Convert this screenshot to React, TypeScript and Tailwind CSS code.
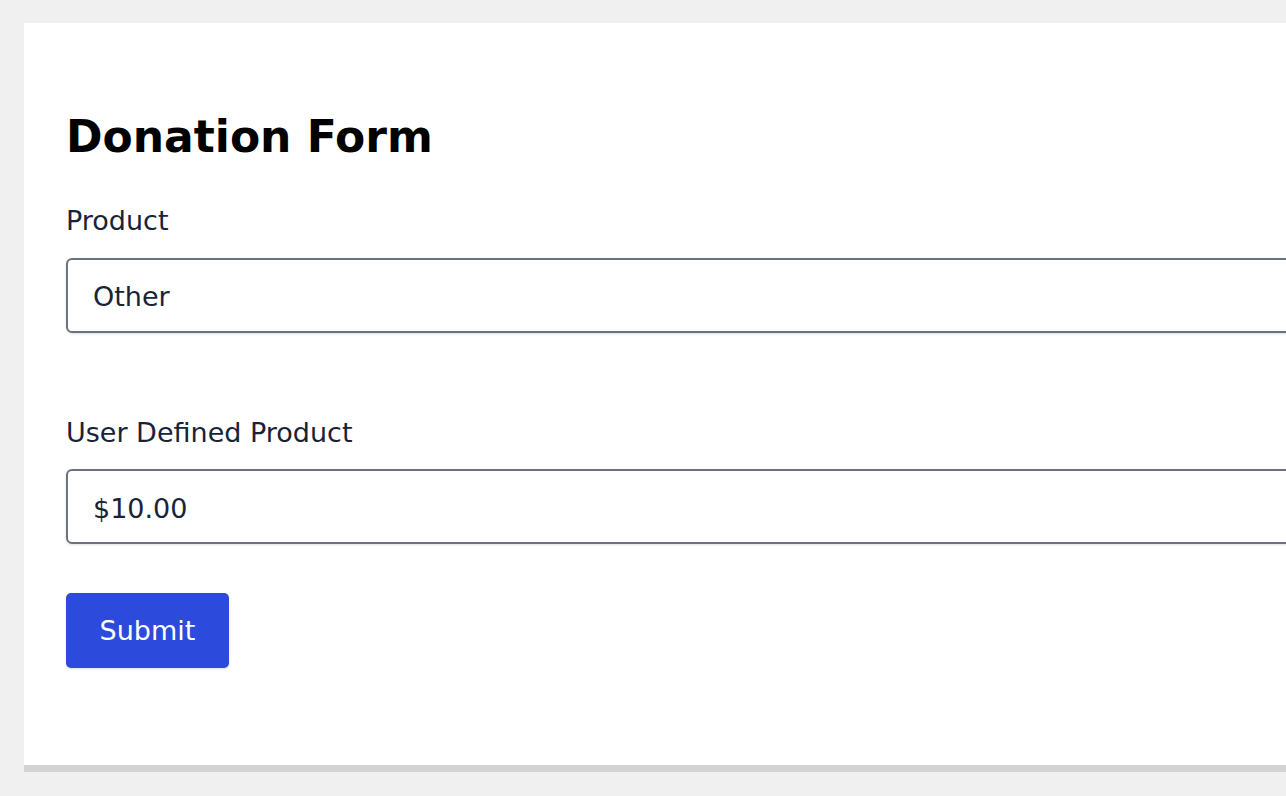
export default function App() {
  return (
    <div className="h-[796px] w-full overflow-hidden bg-[#f0f0f0] pt-[23px] pl-[24px] font-['DejaVu_Sans',sans-serif]">
      <div className="w-[1320px] bg-white pt-[87px] pb-[97px] pl-[42px] shadow-[0_7px_0_0_#d3d3d3]">
        <h1 className="text-[44px] leading-[53px] font-bold text-black">Donation Form</h1>

        <form className="mt-[38px] flex flex-col" onSubmit={(e) => e.preventDefault()}>
          <label className="text-[27px] leading-[40px] text-[#182338]">Product</label>
          <select
            defaultValue="other"
            className="mt-[17px] h-[75px] w-full appearance-none rounded-[6px] border-2 border-[#6b7280] bg-white px-[25px] pt-[3px] text-[27px] text-[#182338] shadow-sm outline-none"
          >
            <option value="basic">Basic</option>
            <option value="other">Other</option>
          </select>

          <label className="mt-[80px] text-[27px] leading-[40px] text-[#182338]">User Defined Product</label>
          <input
            type="text"
            defaultValue="$10.00"
            className="mt-[16px] h-[75px] w-full rounded-[6px] border-2 border-[#6b7280] bg-white px-[25px] pt-[3px] text-[27px] text-[#182338] shadow-sm outline-none"
          />

          <div className="mt-[49px]">
            <button
              type="submit"
              className="h-[75px] w-[163px] rounded-[5px] bg-[#2c4bdd] pt-[2px] text-[27px] text-white shadow-sm"
            >
              Submit
            </button>
          </div>
        </form>
      </div>
    </div>
  );
}
